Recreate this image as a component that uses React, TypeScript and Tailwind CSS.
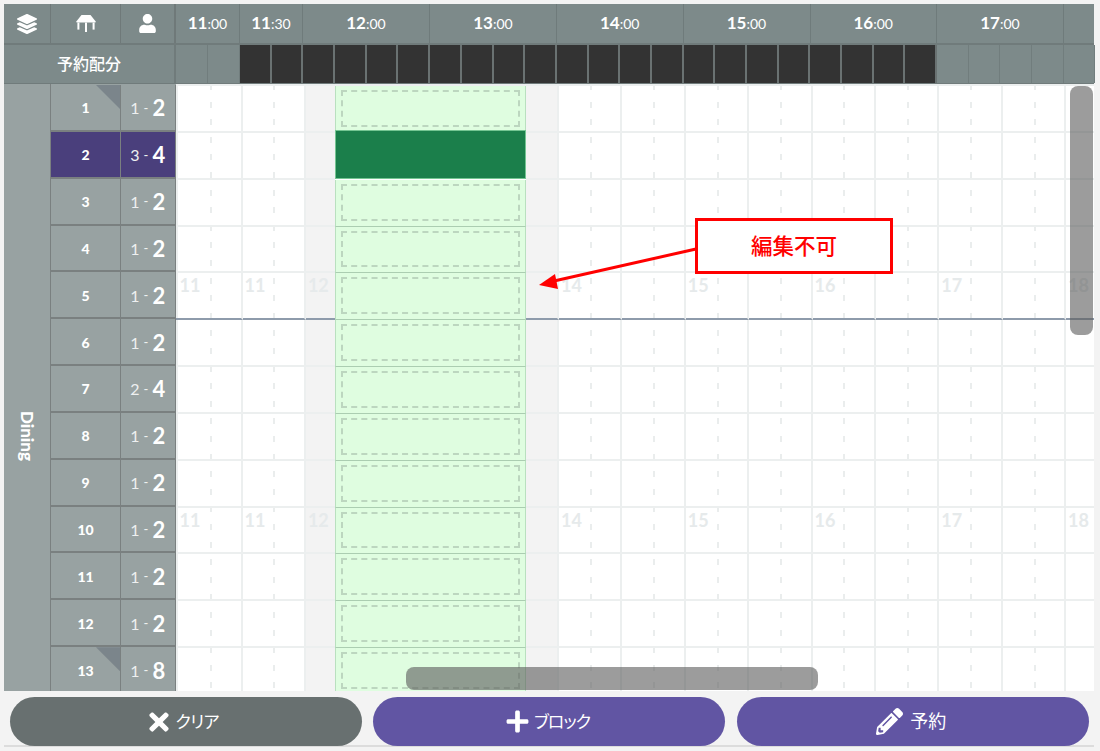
import React from "react";
import { FaLayerGroup, FaUser, FaTimes, FaPlus, FaPencilAlt } from "react-icons/fa";

const HOURS = [
  { w: 64, h: "11", m: "00" },
  { w: 63, h: "11", m: "30" },
  { w: 127, h: "12", m: "00" },
  { w: 127, h: "13", m: "00" },
  { w: 126.5, h: "14", m: "00" },
  { w: 127, h: "15", m: "00" },
  { w: 126.5, h: "16", m: "00" },
  { w: 127, h: "17", m: "00" },
];

const ROWS = [
  { n: "1", a: "1", b: "2", corner: true },
  { n: "2", a: "3", b: "4", active: true },
  { n: "3", a: "1", b: "2" },
  { n: "4", a: "1", b: "2" },
  { n: "5", a: "1", b: "2" },
  { n: "6", a: "1", b: "2" },
  { n: "7", a: "2", b: "4" },
  { n: "8", a: "1", b: "2" },
  { n: "9", a: "1", b: "2" },
  { n: "10", a: "1", b: "2" },
  { n: "11", a: "1", b: "2" },
  { n: "12", a: "1", b: "2" },
  { n: "13", a: "1", b: "8", corner: true },
];

const WHITE_WIDTH = "w-[63.4px]";

function Cell({ className, show, text }: { className: string; show: boolean; text?: string }) {
  return (
    <div className={`shrink-0 border-r-2 border-b-2 border-r-[#ecefef] ${className}`}>
      {text && show ? (
        <span className="block pl-[2px] pt-[2px] text-[18px] leading-[20px] font-bold text-[#e6eaeb]">{text}</span>
      ) : null}
    </div>
  );
}

function GridRow({ index, active }: { index: number; active?: boolean }) {
  const marks = index === 4 || index === 9;
  const line = index === 4 ? "border-b-[#8e9bab]" : "border-b-[#ecefef]";
  return (
    <div className="relative flex h-[46.85px] shrink-0">
      <div className={`w-[2px] shrink-0 border-b-2 bg-[#ecefef] ${line}`} />
      <Cell className={`w-[65px] ${line}`} show={marks} text="11" />
      <Cell className={`${WHITE_WIDTH} ${line}`} show={marks} text="11" />
      <Cell className={`w-[29.1px] bg-[#f3f3f3] !border-r-0 ${line}`} show={marks} text="12" />
      {active ? (
        <div className="-mt-[3px] h-[48.85px] w-[191px] shrink-0 border border-[#74c592] bg-[#1b7f4b]" />
      ) : (
        <div className="w-[191px] shrink-0 border-x border-b border-x-[#b9e0bf] border-b-[#abcdb1] bg-[#dffde0] px-[5px] pt-[4px] pb-[5px]">
          <div className="h-full border-2 border-dashed border-[#bcd6bf]" />
        </div>
      )}
      <Cell className={`w-[33px] bg-[#f3f3f3] ${line}`} show={false} />
      <Cell className={`${WHITE_WIDTH} ${line}`} show={marks} text="14" />
      <Cell className={`${WHITE_WIDTH} ${line}`} show={false} />
      <Cell className={`${WHITE_WIDTH} ${line}`} show={marks} text="15" />
      <Cell className={`${WHITE_WIDTH} ${line}`} show={false} />
      <Cell className={`${WHITE_WIDTH} ${line}`} show={marks} text="16" />
      <Cell className={`${WHITE_WIDTH} ${line}`} show={false} />
      <Cell className={`${WHITE_WIDTH} ${line}`} show={marks} text="17" />
      <Cell className={`${WHITE_WIDTH} ${line}`} show={false} />
      <Cell className={`${WHITE_WIDTH} ${line}`} show={marks} text="18" />
    </div>
  );
}

function LabelRow({ row }: { row: (typeof ROWS)[number] }) {
  const bg = row.active ? "bg-[#4a3f7c]" : "bg-[#98a2a2]";
  return (
    <div className="flex h-[46.85px] shrink-0">
      <div className={`relative flex w-[70px] items-center justify-center border-r border-b-2 border-[#7a8080] pt-[1px] ${bg}`}>
        {row.corner ? (
          <div className="absolute top-0 right-0 h-[24px] w-[24px] bg-[#7b858b] [clip-path:polygon(0_0,100%_0,100%_100%)]" />
        ) : null}
        <span className="text-[14px] font-black text-white">{row.n}</span>
      </div>
      <div className={`flex w-[54.5px] items-center justify-center gap-[4px] border-r border-b-2 border-[#7a8080] pt-[2px] text-white ${bg}`}>
        <span className="text-[16px] text-[#eef0f0]">{row.a}</span>
        <span className="text-[13px] text-[#eef0f0]">-</span>
        <span className="text-[22px] leading-none font-bold">{row.b}</span>
      </div>
    </div>
  );
}

function TableIcon() {
  return (
    <svg width="20" height="17" viewBox="0 0 20 17" fill="white">
      <path d="M5.5 0h9L19.5 6.3V7.6H.5V6.3z" />
      <rect x="1.4" y="7.6" width="2" height="7" />
      <rect x="9" y="7.6" width="2" height="9.4" />
      <rect x="16.6" y="7.6" width="2" height="7" />
    </svg>
  );
}

export default function App() {
  return (
    <div className="relative h-[751px] w-[1100px] overflow-hidden bg-[#f3f3f3] pt-[4px] pl-[4px] [font-family:Lato,'Noto_Sans_CJK_JP',sans-serif]">
      <div className="flex h-[41px] w-[1090px] border-b-2 border-[#707b7b] bg-[#7d8a8a] text-white">
        <div className="flex w-[47px] items-center justify-center border-r border-[#6f7979]">
          <FaLayerGroup size={20} />
        </div>
        <div className="flex w-[70px] items-center justify-center border-r border-[#6f7979]">
          <TableIcon />
        </div>
        <div className="flex w-[55px] items-center justify-center border-r-2 border-[#6f7979]">
          <FaUser size={19} />
        </div>
        {HOURS.map((t, i) => (
          <div
            key={i}
            style={{ width: t.w }}
            className="flex shrink-0 items-baseline justify-center border-r border-[#6f7b7b] pt-[6px]"
          >
            <span className="text-[17px] font-bold">{t.h}</span>
            <span className="text-[14px]">:{t.m}</span>
          </div>
        ))}
      </div>
      <div className="flex h-[39px] w-[1090px] border-b border-[#707b7b] bg-[#7d8a8a]">
        <div className="flex w-[172px] shrink-0 items-center justify-center border-r-2 border-[#707b7b] text-[16px] font-medium text-white">
          予約配分
        </div>
        {Array.from({ length: 2 }).map((_, i) => (
          <div key={i} className="w-[32px] shrink-0 border-r border-[#717d7d]" />
        ))}
        {Array.from({ length: 22 }).map((_, i) => (
          <div key={i} className="w-[31.7px] shrink-0 border-r-2 border-[#6a7272] bg-[#333333]" />
        ))}
        {Array.from({ length: 5 }).map((_, i) => (
          <div key={i} className="w-[31.6px] shrink-0 border-r border-[#717d7d]" />
        ))}
      </div>

      <div className="relative flex h-[607px] w-[1090px] overflow-hidden bg-white">
        <div className="flex h-[703px] w-[47px] shrink-0 items-center justify-center border-r border-[#7a8080] bg-[#98a2a2]">
          <span className="text-[17px] font-black text-white [writing-mode:vertical-rl]">Dining</span>
        </div>
        <div className="flex w-[124.5px] shrink-0 flex-col bg-[#98a2a2] pt-[1px]">
          {ROWS.map((r) => (
            <LabelRow key={r.n} row={r} />
          ))}
        </div>
        <div className="relative flex min-w-0 flex-1 flex-col overflow-hidden border-t-2 border-[#ecefef]">
          <div className="absolute -top-[2px] right-0 bottom-0 left-0 flex pl-[34px]">
            {Array.from({ length: 15 }).map((_, i) => (
              <div key={i} className="w-[63.4px] shrink-0">
                <div className="h-full w-[2px] bg-[repeating-linear-gradient(to_bottom,#eaeded_0,#eaeded_6px,transparent_6px,transparent_17.6px)]" />
              </div>
            ))}
          </div>
          {ROWS.map((r, i) => (
            <GridRow key={r.n} index={i} active={r.active} />
          ))}
        </div>
        <div className="absolute top-[2px] right-[1px] h-[249px] w-[23px] rounded-[8px] bg-[#5a5a5a]/60" />
        <div className="absolute bottom-[1px] left-[402px] h-[23px] w-[412px] rounded-[8px] bg-[#5a5a5a]/60" />
      </div>

      <div className="flex h-[56px] w-[1090px] gap-[11.5px] border-b-2 border-[#dcdcdc] pt-[6px] pl-[6px] text-[18px] font-normal text-white [font-feature-settings:'palt']">
        <button className="flex h-[49px] w-[351.5px] items-center justify-center gap-[2px] rounded-full bg-[#687070] pr-[7px]">
          <FaTimes size={28} />
          <span className="text-[17px] tracking-[-0.5px]">クリア</span>
        </button>
        <button className="flex h-[49px] w-[352px] items-center justify-center gap-[4px] rounded-full bg-[#6155a3] pr-[3px]">
          <FaPlus size={25} />
          <span className="text-[17px] tracking-[-1px]">ブロック</span>
        </button>
        <button className="flex h-[49px] w-[352.5px] items-center justify-center gap-[7px] rounded-full bg-[#6155a3] pr-[3px]">
          <FaPencilAlt size={27} />
          <span>予約</span>
        </button>
      </div>

      <svg className="absolute top-[240px] left-[530px]" width="175" height="55" viewBox="530 240 175 55">
        <line x1="696" y1="249" x2="554" y2="281" stroke="#ff0000" strokeWidth="3" />
        <polygon points="539,285 555,274 558,289" fill="#ff0000" />
      </svg>
      <div className="absolute top-[218px] left-[695px] flex h-[56px] w-[198px] items-center justify-center border-[3px] border-[#ff0000] bg-white text-[21.5px] font-medium text-[#ff0000]">
        編集不可
      </div>
    </div>
  );
}
